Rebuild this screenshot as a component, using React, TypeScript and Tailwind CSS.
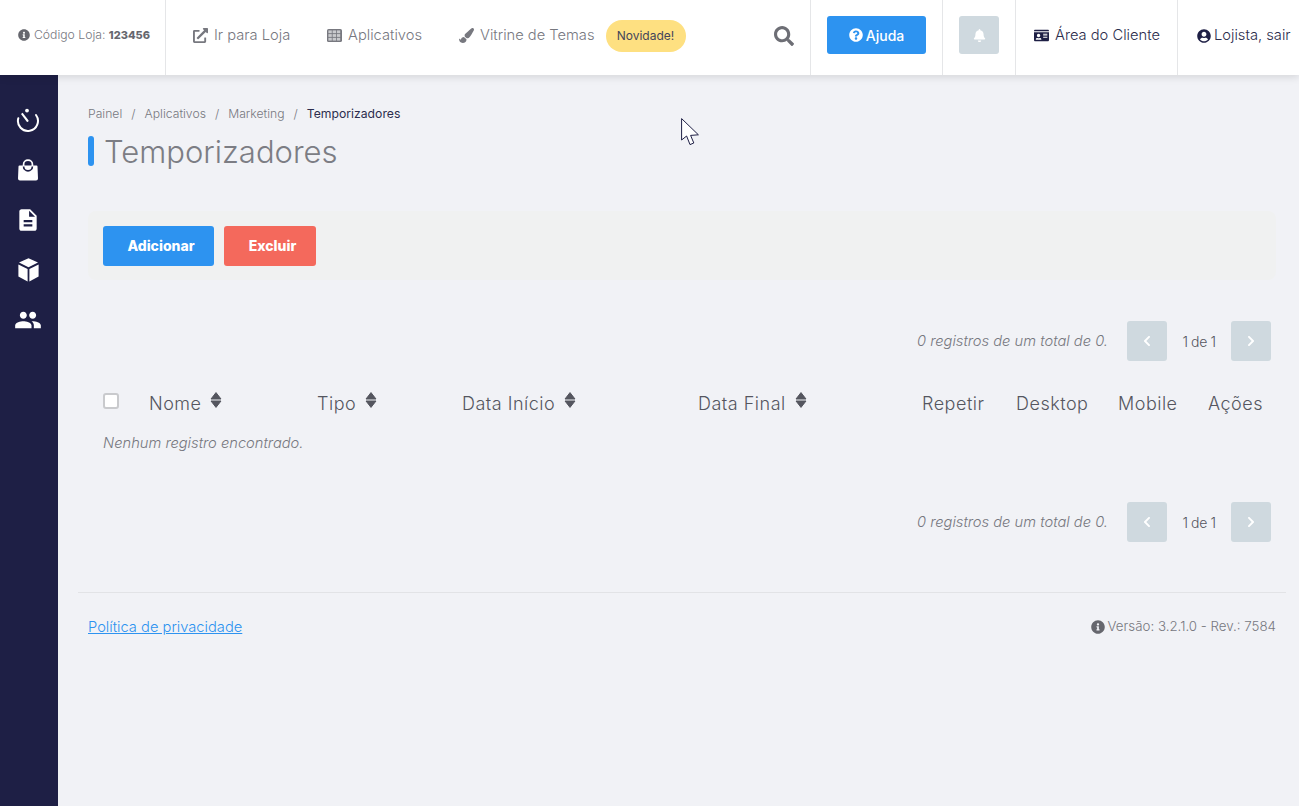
import React from "react";
import { FaExternalLinkAlt, FaPaintBrush, FaSearch, FaQuestionCircle, FaBell, FaIdCard, FaUserCircle, FaInfoCircle, FaChevronLeft, FaChevronRight } from "react-icons/fa";
import { MdDescription, MdPeople } from "react-icons/md";

const font = { fontFamily: '"Inter", "Lato", sans-serif' };

function Timer() {
  return (
    <svg width="24" height="24" viewBox="0 0 24 24" fill="none">
      <path d="M20 7 A10 10 0 1 1 2.3 10.3" stroke="#fff" strokeWidth="2" strokeLinecap="round" />
      <path d="M5 6 L6.6 4.8 L12.6 12.4 A1.6 1.6 0 0 1 11 14 Z" fill="#fff" />
      <circle cx="11" cy="2.6" r="1.9" fill="#fff" />
    </svg>
  );
}

function Bag() {
  return (
    <svg width="20" height="22" viewBox="0 0 20 22" fill="none">
      <path d="M1.5 6.5 H18.5 A1 1 0 0 1 19.5 7.5 L20 19.5 A2 2 0 0 1 18 21.5 H2 A2 2 0 0 1 0 19.5 L.5 7.5 A1 1 0 0 1 1.5 6.5Z" fill="#fff" />
      <path d="M5.6 7 V5.3 A4.4 4.1 0 0 1 14.4 5.3 V7" stroke="#fff" strokeWidth="1.7" />
      <path d="M5.6 7.4 A4.4 4.4 0 0 0 14.4 7.4" stroke="#1e1f45" strokeWidth="1.7" />
    </svg>
  );
}

function Cube() {
  return (
    <svg width="21" height="24" viewBox="0 0 21 24">
      <path d="M10.5 0.2 L20 4.6 L10.5 9.2 L1 4.6 Z" fill="#fff" />
      <path d="M0.4 6.6 L9.6 11 V23.6 L0.4 18.6 Z" fill="#fff" />
      <path d="M20.6 6.6 L11.4 11 V23.6 L20.6 18.6 Z" fill="#fff" />
    </svg>
  );
}

function Grid() {
  return (
    <svg width="15" height="13" viewBox="0 0 15 13" className="mr-[6px]">
      <rect width="15" height="13" rx="1.6" fill="#77787f" />
      {[1.4, 5.6, 9.8].flatMap((x) =>
        [1.4, 5.1, 8.8].map((y) => <rect key={`${x}-${y}`} x={x} y={y} width="3.4" height="2.8" fill="#c9cacd" />)
      )}
    </svg>
  );
}

function SortIcon() {
  return (
    <svg width="12" height="16" viewBox="0 0 12 16" className="ml-[9px] -mt-[7px]">
      <path d="M1 7 L6 .6 L11 7 Z M1 9 L6 15.4 L11 9 Z" fill="#55565f" stroke="#55565f" strokeWidth="1" strokeLinejoin="round" />
    </svg>
  );
}

function Cursor() {
  return (
    <svg className="absolute left-[681px] top-[118px]" width="19" height="28" viewBox="0 0 19 28">
      <path d="M0.6 0.6 V22 L5.6 18 L9 26.6 L12.8 25 L9.6 17.4 L17.4 16.8 Z" fill="#fff" stroke="#1e1f45" strokeWidth="1" />
    </svg>
  );
}

function Pagination() {
  return (
    <div className="flex items-center justify-end h-10 pr-[5px]">
      <span className="italic text-[14.7px] text-[#77787f] mr-[19px]">0 registros de um total de 0.</span>
      <button className="w-10 h-10 rounded-[3px] bg-[#cfd9df] text-white flex items-center justify-center"><FaChevronLeft size={12} /></button>
      <span className="w-[64px] text-center text-[14px] text-[#55565f] tracking-[-0.4px]">1 de 1</span>
      <button className="w-10 h-10 rounded-[3px] bg-[#cfd9df] text-white flex items-center justify-center"><FaChevronRight size={12} /></button>
    </div>
  );
}

function Col({ w, label, sort }: { w: string; label: string; sort?: boolean }) {
  return (
    <div className={`${w} flex items-center shrink-0`}>
      <span>{label}</span>
      {sort && <SortIcon />}
    </div>
  );
}

export default function App() {
  return (
    <div className="relative min-h-[806px] bg-[#f1f2f6] flex flex-col overflow-hidden font-light" style={font}>
      <header className="relative z-10 h-[75px] bg-white flex items-stretch shadow-[0_2px_8px_rgba(0,0,0,0.12)] text-[14.7px] text-[#77787f]">
        <div className="w-[166px] shrink-0 border-r border-[#e5e6e8] flex items-center pb-[5px] pl-[18px] text-[12.2px] whitespace-nowrap">
          <FaInfoCircle size={12} className="text-[#66676e] mr-[4px]" />
          <span>Código Loja:&nbsp;</span><b className="text-[#66676e] font-extrabold text-[11px]">123456</b>
        </div>
        <nav className="w-[645px] shrink-0 border-r border-[#e5e6e8] flex items-center pb-[4px] pl-[27px] whitespace-nowrap">
          <span className="flex items-center w-[134px]"><FaExternalLinkAlt size={15} className="mr-[6px]" />Ir para Loja</span>
          <span className="flex items-center w-[132px]"><Grid />Aplicativos</span>
          <span className="flex items-center"><FaPaintBrush size={15} className="mr-[6px]" />Vitrine de Temas</span>
          <span className="ml-[11px] h-8 w-[80px] flex items-center justify-center rounded-full bg-[#fee081] text-[12px] font-normal text-[#44455a]">Novidade!</span>
          <FaSearch size={20} className="ml-auto mr-[16px] text-[#6d6e75]" />
        </nav>
        <div className="w-[132px] shrink-0 border-r border-[#e5e6e8] flex items-center pb-[5px] pl-[16px]">
          <button className="w-[99px] h-[38px] rounded-[3px] bg-[#2d93f0] text-white flex items-center justify-center font-medium text-[14px]"><FaQuestionCircle size={14} className="mr-[3px]" />Ajuda</button>
        </div>
        <div className="w-[73px] shrink-0 border-r border-[#e5e6e8] flex items-center pb-[5px] pl-[16px]">
          <button className="w-10 h-[38px] rounded-[3px] bg-[#cfd9df] text-white flex items-center justify-center"><FaBell size={13} /></button>
        </div>
        <div className="w-[162px] shrink-0 border-r border-[#e5e6e8] flex items-center pb-[4px] pl-[18px] text-[#2c2d4d] whitespace-nowrap">
          <FaIdCard size={15} className="text-[#1e1f45] mr-[6px]" />Área do Cliente
        </div>
        <div className="flex-1 flex items-center pb-[4px] pl-[19px] text-[#2c2d4d] whitespace-nowrap">
          <FaUserCircle size={14} className="text-[#1e1f45] mr-[3px]" />Lojista, sair
        </div>
      </header>

      <div className="flex flex-1">
        <aside className="w-[58px] shrink-0 bg-[#1e1f45] text-white flex flex-col items-center pt-[33px] pr-[2px]">
          <div className="h-6 flex items-center justify-center"><Timer /></div>
          <div className="h-[22px] mt-[27px] flex items-center justify-center"><Bag /></div>
          <div className="h-6 mt-[27px] flex items-center justify-center"><MdDescription size={26} /></div>
          <div className="h-6 mt-[26px] flex items-center justify-center"><Cube /></div>
          <div className="h-6 mt-[26px] flex items-center justify-center"><MdPeople size={28} /></div>
        </aside>

        <main className="flex-1 min-w-0 px-[13px]">
          <div className="px-[10px] ml-[7px]">
            <div className="pt-[31px] flex items-center h-[48px] text-[12.2px] text-[#77787f]">
              <span>Painel</span><span className="mx-[9px]">/</span>
              <span>Aplicativos</span><span className="mx-[9px]">/</span>
              <span>Marketing</span><span className="mx-[9px]">/</span>
              <span className="text-[#2c2d4d] font-normal">Temporizadores</span>
            </div>
            <div className="flex items-center mt-[13px] h-[30px]">
              <div className="w-[6px] h-[30px] rounded-[3px] bg-[#2d93f0] mr-[10px]" />
              <h1 className="text-[31px] leading-none text-[#7c7d84] font-light">Temporizadores</h1>
            </div>

            <div className="mt-[45px] h-[69px] rounded-lg bg-[#f0f1f1] flex items-center pl-[15px] gap-[10px] w-[1188px]">
              <button className="w-[111px] h-10 pl-[5px] rounded-[3px] bg-[#2d93f0] text-white text-[14px] font-extrabold">Adicionar</button>
              <button className="w-[92px] h-10 pl-[5px] rounded-[3px] bg-[#f4695c] text-white text-[14px] font-extrabold">Excluir</button>
            </div>

            <div className="mt-[41px] w-[1188px]"><Pagination /></div>

            <div className="mt-[21px] pl-[15px] w-[1188px] flex items-center h-[42px] text-[18px] tracking-[0.5px] text-[#55565f]">
              <div className="w-[46px] shrink-0"><div className="w-4 h-4 rounded-[3px] border-2 border-[#c9cacd] bg-white -mt-[5px]" /></div>
              <Col w="w-[168px]" label="Nome" sort />
              <Col w="w-[145px]" label="Tipo" sort />
              <Col w="w-[236px]" label="Data Início" sort />
              <Col w="w-[224px]" label="Data Final" sort />
              <Col w="w-[94px]" label="Repetir" />
              <Col w="w-[102px]" label="Desktop" />
              <Col w="w-[90px]" label="Mobile" />
              <Col w="w-[60px]" label="Ações" />
            </div>
            <p className="pl-[15px] mt-[9px] h-[20px] leading-[20px] italic text-[14.7px] text-[#77787f]">Nenhum registro encontrado.</p>

            <div className="mt-[49px] w-[1188px]"><Pagination /></div>
          </div>

          <hr className="mt-[50px] border-t border-[#e2e3e6] w-[1208px] ml-[7px]" />
          <div className="flex justify-between items-center mt-[23px] ml-[17px] w-[1188px] text-[13.3px] text-[#77787f]">
            <a className="text-[#2d93f0] underline text-[14.7px]">Política de privacidade</a>
            <span className="flex items-center"><FaInfoCircle size={14} className="text-[#66676e] mr-[3px]" />Versão: 3.2.1.0 - Rev.: 7584</span>
          </div>
        </main>
      </div>
      <Cursor />
    </div>
  );
}
